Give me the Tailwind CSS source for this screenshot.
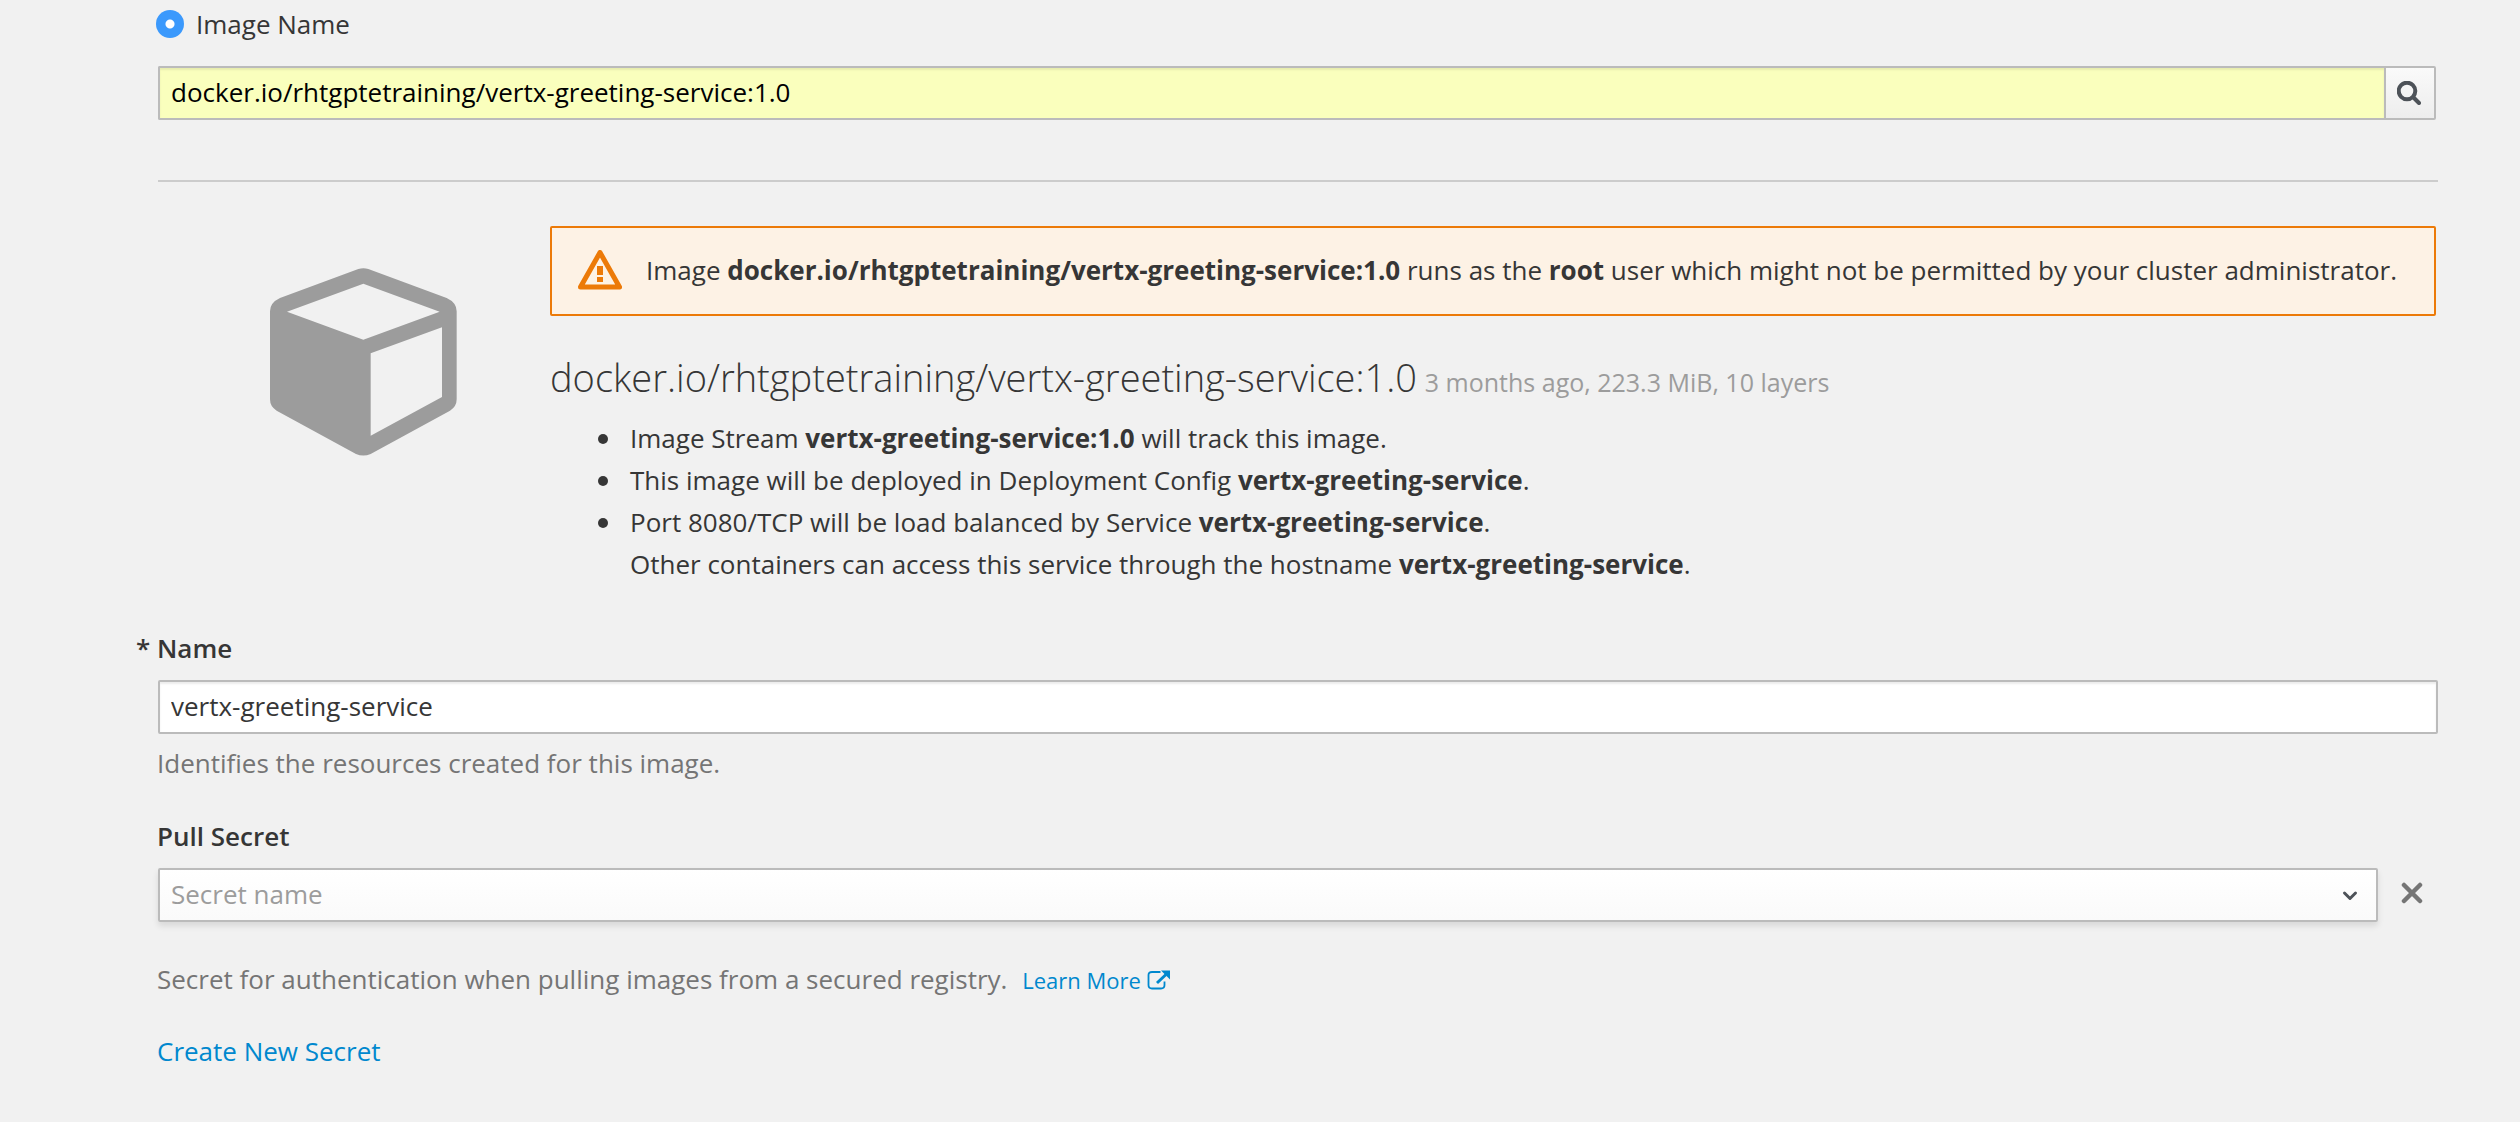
<!DOCTYPE html>
<html lang="en">
<head>
<meta charset="utf-8">
<meta name="viewport" content="width=device-width, initial-scale=1">
<title>Deploy Image</title>
<script src="https://cdn.jsdelivr.net/npm/@tailwindcss/browser@4"></script>
</head>
<body class="min-h-screen bg-[#f1f1f1] font-['Open_Sans',sans-serif] text-[26px] leading-[42px] text-[#363636]">
<main class="pt-[3px] pr-[82px] pb-12 pl-[157px]">
  <form>
    <div class="-ml-px flex items-center gap-3">
      <input type="radio" id="mode-image" name="mode" checked class="size-7 shrink-0 appearance-none rounded-full bg-[radial-gradient(circle,#fff_4px,#3b99fc_5px)]">
      <label for="mode-image">Image Name</label>
    </div>

    <div class="mt-[21px] mr-0.5 ml-px flex h-[54px]">
      <input type="text" aria-label="Image name" value="docker.io/rhtgptetraining/vertx-greeting-service:1.0" class="min-w-0 flex-1 rounded-l-[2px] border-2 border-r-0 border-[#bbb] bg-[#faffbd] px-[11px] pb-0.5 text-black shadow-[inset_0_2px_2px_rgba(3,3,3,0.075)]">
      <button type="button" aria-label="Search" class="flex w-[52px] items-center justify-center rounded-r-[2px] border-2 border-[#bbb] bg-linear-to-b from-[#fafafa] to-[#ededed] pr-0.5 text-[#4d5258]">
        <svg class="size-6" viewBox="0 0 24 24" fill="none" stroke="currentColor" stroke-width="4" stroke-linecap="round"><circle cx="10" cy="10" r="8.3"/><path d="M16.5 16.5 22 22"/></svg>
      </button>
    </div>

    <hr class="mt-[60px] ml-px border-t-2 border-[#ccc]">

    <section class="mt-11 ml-px flex">
      <div class="w-[392px] shrink-0 pt-[42px] pl-28">
        <svg class="h-[188px] w-[187px] text-[#9c9c9c]" viewBox="90 83 561 562" fill="currentColor" fill-rule="evenodd"><path d="M355 85Q370 81 385 85L620 172Q650 186 650 212V476Q650 498 630 510L392 640Q370 649 348 640L110 510Q90 498 90 476V212Q90 186 120 172ZM370 129 141 213 370 297 599 213ZM392 338V585L606 469V260Z"/></svg>
      </div>
      <div class="min-w-0 flex-1">
        <div role="alert" class="mr-0.5 flex min-h-[90px] items-center gap-6 rounded-[2px] border-2 border-[#ec7a08] bg-[#fdf2e5] py-2 pl-[26px] pb-[10px]">
          <svg class="h-10 w-11 shrink-0 text-[#ec7a08]" viewBox="0 0 44 40"><path d="M22 2.500 41.500 37H2.500Z" fill="none" stroke="currentColor" stroke-width="5" stroke-linejoin="round"/><path d="M19 16h6v9h-6zM19 27h6v5h-6z" fill="currentColor"/></svg>
          <p>Image <strong>docker.io/rhtgptetraining/vertx-greeting-service:1.0</strong> runs as the <strong>root</strong> user which might not be permitted by your cluster administrator.</p>
        </div>
        <h2 class="mt-[39px] text-[38px] leading-[44px] font-light">docker.io/rhtgptetraining/vertx-greeting-service:1.0 <small class="-ml-0.5 text-[25px] leading-none font-normal text-[#9c9c9c]">3 months ago, 223.3 MiB, 10 layers</small></h2>
        <ul class="mt-[18px] pl-12">
          <li class="flex gap-[22px] before:mt-[17px] before:size-2.5 before:shrink-0 before:rounded-full before:bg-[#363636]"><p>Image Stream <strong>vertx-greeting-service:1.0</strong> will track this image.</p></li>
          <li class="flex gap-[22px] before:mt-[17px] before:size-2.5 before:shrink-0 before:rounded-full before:bg-[#363636]"><p>This image will be deployed in Deployment Config <strong>vertx-greeting-service</strong>.</p></li>
          <li class="flex gap-[22px] before:mt-[17px] before:size-2.5 before:shrink-0 before:rounded-full before:bg-[#363636]"><p>Port 8080/TCP will be load balanced by Service <strong>vertx-greeting-service</strong>.<br>Other containers can access this service through the hostname <strong>vertx-greeting-service</strong>.</p></li>
        </ul>
      </div>
    </section>

    <div class="mt-[42px]">
      <label for="name" class="-ml-[21px] block font-semibold">* Name</label>
      <div class="mt-[11px] ml-px">
        <input type="text" id="name" value="vertx-greeting-service" class="block h-[54px] w-full rounded-[2px] border-2 border-[#bbb] bg-white px-[11px] pb-0.5 shadow-[inset_0_2px_2px_rgba(3,3,3,0.075)]">
      </div>
      <p class="mt-2 text-[#757575]">Identifies the resources created for this image.</p>
    </div>

    <div class="mt-[31px]">
      <label for="secret" class="block font-semibold">Pull Secret</label>
      <div class="mt-[11px] ml-px flex items-center">
        <div class="relative flex-1">
          <select id="secret" class="block h-[54px] w-full appearance-none rounded-[2px] border-2 border-[#bbb] bg-linear-to-b from-white to-[#fafafa] px-[11px] pb-0.5 text-[#9c9c9c] shadow-[0_4px_6px_rgba(3,3,3,0.1)]"><option>Secret name</option></select>
          <svg class="pointer-events-none absolute top-[22px] right-5 h-3 w-4 text-[#4d5258]" viewBox="0 0 16 12" fill="none" stroke="currentColor" stroke-width="3" stroke-linecap="round" stroke-linejoin="round"><path d="M2.500 3 8 8.500 13.500 3"/></svg>
        </div>
        <button type="button" aria-label="Remove secret" class="flex w-[60px] pb-1 pl-[23px] text-[#757575]">
          <svg class="size-[22px]" viewBox="0 0 22 22" fill="none" stroke="currentColor" stroke-width="4.500" stroke-linecap="round"><path d="M3 3 19 19M19 3 3 19"/></svg>
        </button>
      </div>
      <p class="mt-9 text-[#757575]">Secret for authentication when pulling images from a secured registry.
        <a href="#" class="ml-2 text-[22px] leading-none text-[#0088ce]">Learn More <svg class="inline h-5 w-6 align-[-1px]" viewBox="0 0 24 20" fill="none" stroke="currentColor"><path d="M13.500 2H5Q1.500 2 1.500 5V15Q1.500 18.500 5 18.500H14Q17.500 18.500 17.500 15V11.500" stroke-width="1.800"/><path d="M10 13 19 4.500" stroke-width="3"/><path d="M14 .5H23V9.500Z" fill="currentColor" stroke="none"/></svg></a>
      </p>
    </div>

    <p class="mt-[30px]"><a href="#" class="text-[#0088ce]">Create New Secret</a></p>
  </form>
</main>
</body>
</html>
